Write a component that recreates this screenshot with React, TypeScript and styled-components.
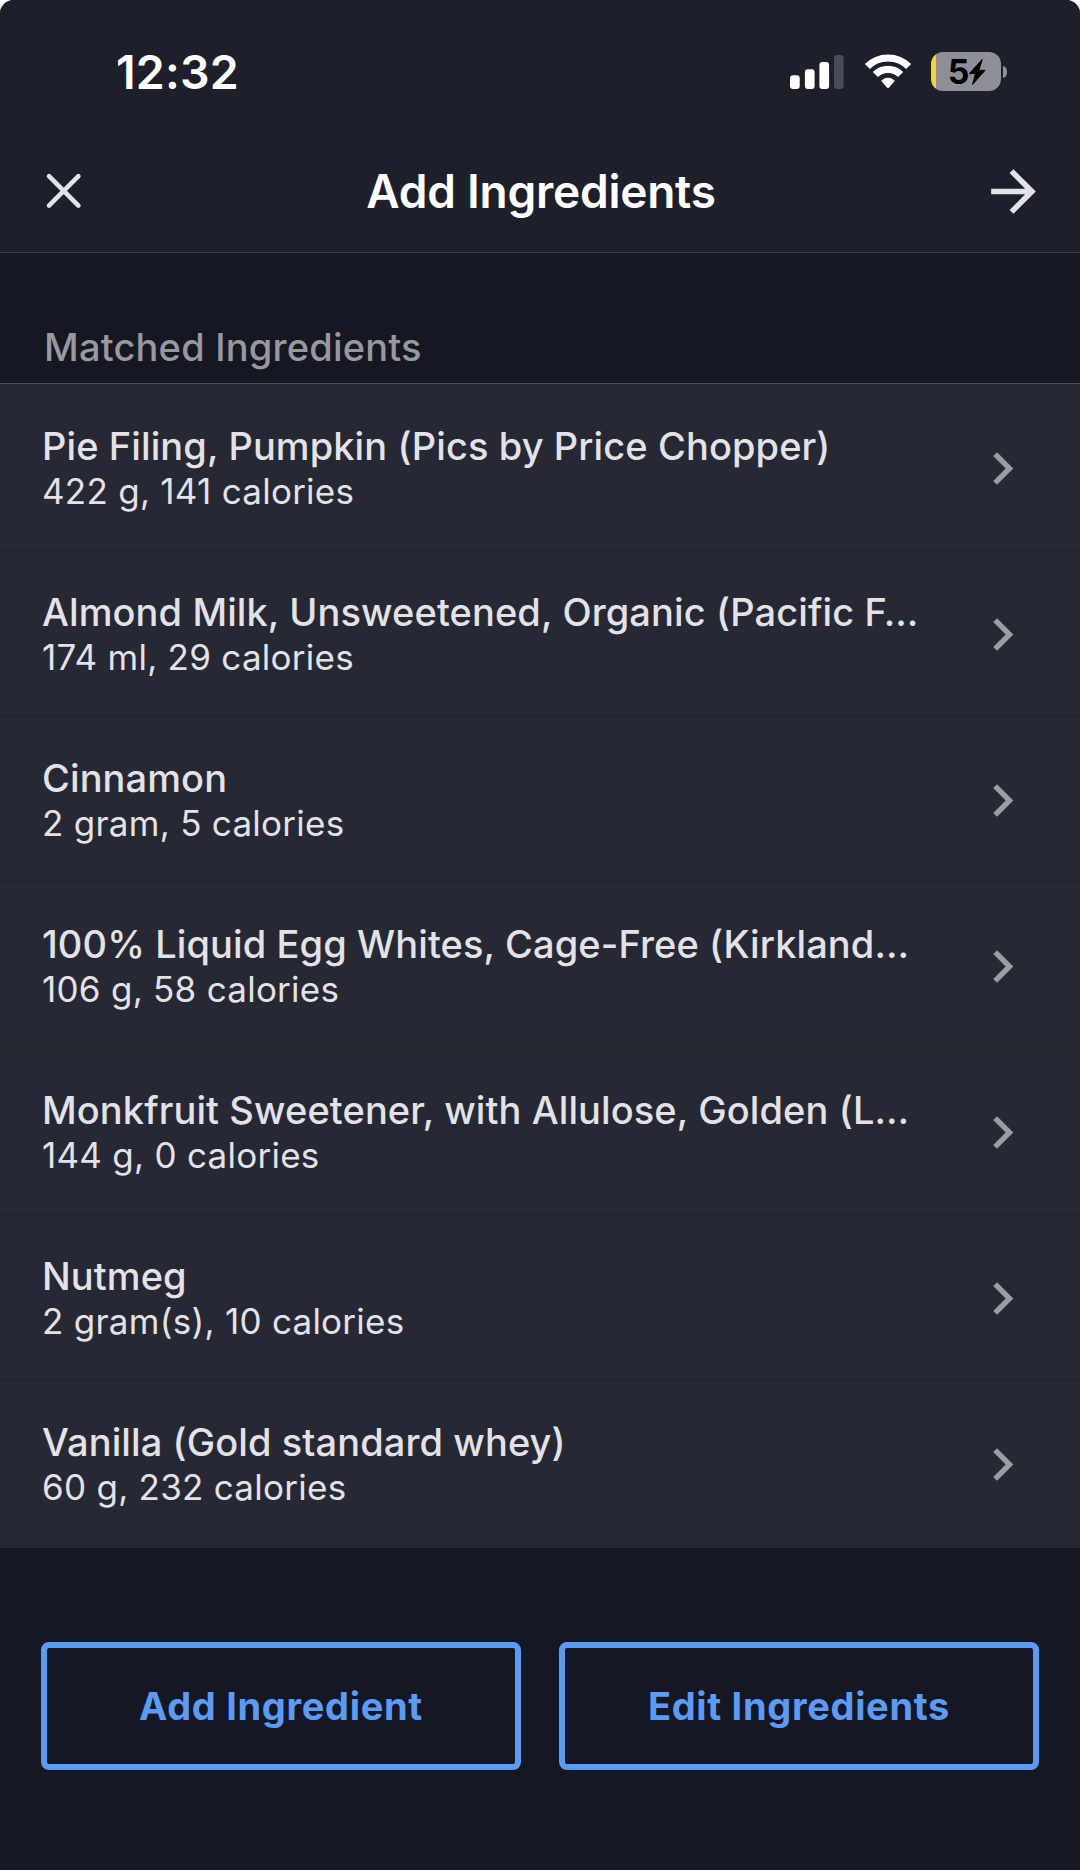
import React from "react";
import styled, { createGlobalStyle } from "styled-components";

const color = {
  bar: "#1d1f2a",
  page: "#151722",
  row: "#262833",
  text: "#e2e2e7",
  muted: "#98989e",
  accent: "#5c9bf5",
};

const GlobalStyle = createGlobalStyle`
  * { box-sizing: border-box; }
  body {
    margin: 0;
    background: #ffffff;
  }
`;

const Screen = styled.div`
  display: flex;
  flex-direction: column;
  width: 1080px;
  height: 1870px;
  overflow: hidden;
  border-radius: 14px 14px 0 0;
  background: ${color.page};
  color: ${color.text};
  font-family: Inter, "Liberation Sans", sans-serif;
`;

const Header = styled.header`
  flex: none;
  height: 253px;
  background: ${color.bar};
  border-bottom: 1px solid #3b3d48;
`;

const StatusBar = styled.div`
  display: flex;
  align-items: center;
  justify-content: space-between;
  height: 144px;
  padding: 0 73px 0 116px;
`;

const Time = styled.span`
  font-size: 46.5px;
  font-weight: 600;
  line-height: 56px;
  letter-spacing: 0.15px;
  color: #ffffff;
`;

const StatusIcons = styled.div`
  display: flex;
  align-items: center;
`;

const SignalIcon = styled.svg`
  width: 54px;
  height: 36px;
  margin-right: 20px;
`;

const WifiIcon = styled.svg`
  width: 48px;
  height: 36px;
  margin-right: 19px;
`;

const Battery = styled.div`
  display: flex;
  align-items: center;
  gap: 2px;
  padding-bottom: 1px;
`;

const BatteryBody = styled.div`
  display: flex;
  align-items: center;
  justify-content: center;
  width: 70px;
  height: 39px;
  padding-left: 2px;
  border-radius: 12px;
  background: linear-gradient(to right, #fbd133 5px, #8f9097 5px);
  color: #000000;
`;

const BatteryLevel = styled.span`
  font-size: 34px;
  font-weight: 700;
  line-height: 38px;
  letter-spacing: -1px;
`;

const BoltIcon = styled.svg`
  width: 18px;
  height: 28px;
`;

const BatteryCap = styled.div`
  width: 4px;
  height: 12px;
  border-radius: 0 4px 4px 0 / 0 6px 6px 0;
  background: #8f9097;
`;

const NavBar = styled.nav`
  display: grid;
  grid-template-columns: 100px 1fr 100px;
  align-items: center;
  height: 94px;
  padding: 0 33px;
`;

const NavButton = styled.button<{ $align: "start" | "end" }>`
  display: flex;
  justify-self: ${(p) => p.$align};
  padding: 0;
  border: 0;
  background: none;
  color: ${color.text};
`;

const Title = styled.h1`
  margin: 0;
  padding: 0 0 1px 2px;
  text-align: center;
  font-size: 46px;
  font-weight: 600;
  line-height: 56px;
  letter-spacing: -0.25px;
  color: #ffffff;
`;

const SectionHeading = styled.h2`
  display: flex;
  align-items: flex-end;
  flex: none;
  height: 131px;
  margin: 0;
  padding: 0 44px 13px;
  border-bottom: 1px solid #4a4c56;
  font-size: 38px;
  font-weight: 500;
  line-height: 46px;
  letter-spacing: 0.2px;
  color: ${color.muted};
`;

const List = styled.ul`
  flex: none;
  margin: 0;
  padding: 1px 0 0;
  background: ${color.row};
  list-style: none;
`;

const Row = styled.li`
  display: flex;
  align-items: center;
  justify-content: space-between;
  height: 166px;
  padding: 3px 45px 0 42px;
  border-bottom: 2px solid #22242e;

  &:last-child {
    height: 167px;
    padding-bottom: 3px;
    border-bottom: 0;
  }
`;

const RowText = styled.div`
  display: flex;
  flex-direction: column;
  white-space: nowrap;
`;

const Name = styled.span`
  font-size: 38px;
  font-weight: 500;
  line-height: 46px;
  letter-spacing: 0.1px;
`;

const Detail = styled.span`
  font-size: 35px;
  font-weight: 400;
  line-height: 45px;
  letter-spacing: 0.26px;
`;

const ChevronIcon = styled.svg`
  width: 65px;
  height: 65px;
  color: #9c9da3;
`;

const Actions = styled.div`
  display: grid;
  grid-template-columns: 1fr 1fr;
  gap: 38px;
  padding: 94px 41px 0;
`;

const ActionButton = styled.button`
  height: 128px;
  padding: 0;
  border: 6px solid ${color.accent};
  border-radius: 8px;
  background: none;
  color: ${color.accent};
  font-family: inherit;
  font-size: 38px;
  font-weight: 700;
  line-height: 46px;
  letter-spacing: 0.68px;
`;

const ingredients = [
  { name: "Pie Filing, Pumpkin (Pics by Price Chopper)", detail: "422 g, 141 calories" },
  { name: "Almond Milk, Unsweetened, Organic (Pacific F…", detail: "174 ml, 29 calories" },
  { name: "Cinnamon", detail: "2 gram, 5 calories" },
  { name: "100% Liquid Egg Whites, Cage-Free (Kirkland…", detail: "106 g, 58 calories" },
  { name: "Monkfruit Sweetener, with Allulose, Golden (L…", detail: "144 g, 0 calories" },
  { name: "Nutmeg", detail: "2 gram(s), 10 calories" },
  { name: "Vanilla (Gold standard whey)", detail: "60 g, 232 calories" },
];

function Signal() {
  return (
    <SignalIcon viewBox="0 0 54 36">
      <g fill="#ffffff">
        <rect x="0" y="21.3" width="9.7" height="13.7" rx="3" />
        <rect x="14.9" y="15.2" width="9.7" height="19.8" rx="3" />
        <rect x="29.4" y="8" width="9.7" height="27" rx="3" />
      </g>
      <rect x="44" y="1" width="9.7" height="34" rx="3" fill="#4a4b57" />
    </SignalIcon>
  );
}

function Wifi() {
  return (
    <WifiIcon viewBox="0 0 48 36">
      <g fill="none" stroke="#ffffff" strokeWidth="7.2">
        <path d="M3.4 12.5A29.2 29.2 0 0 1 44.6 12.5" />
        <path d="M11.4 20.5A17.9 17.9 0 0 1 36.6 20.5" />
      </g>
      <path
        d="M17.6 26.8Q24 21.3 30.4 26.8L24.7 33.6Q24 34.4 23.3 33.6Z"
        fill="#ffffff"
        stroke="#ffffff"
        strokeWidth="0.8"
        strokeLinejoin="round"
      />
    </WifiIcon>
  );
}

export default function App() {
  return (
    <>
      <GlobalStyle />
      <Screen>
        <Header>
          <StatusBar>
            <Time>12:32</Time>
            <StatusIcons>
              <Signal />
              <Wifi />
              <Battery>
                <BatteryBody>
                  <BatteryLevel>5</BatteryLevel>
                  <BoltIcon viewBox="0 0 18 28">
                    <path
                      d="M14.2 1.4L1.4 15.6H7.4L4.6 26.4L17 12.4H10.8Z"
                      fill="currentColor"
                      stroke="currentColor"
                      strokeWidth="1"
                      strokeLinejoin="round"
                    />
                  </BoltIcon>
                </BatteryBody>
                <BatteryCap />
              </Battery>
            </StatusIcons>
          </StatusBar>
          <NavBar>
            <NavButton $align="start" aria-label="Close">
              <svg width="60" height="60" viewBox="0 0 60 60">
                <path
                  d="M16 15.2L45.4 44.6M45.4 15.2L16 44.6"
                  stroke="currentColor"
                  strokeWidth="4.6"
                  strokeLinecap="round"
                />
              </svg>
            </NavButton>
            <Title>Add Ingredients</Title>
            <NavButton $align="end" aria-label="Next">
              <svg width="67" height="67" viewBox="0 0 24 24" fill="currentColor">
                <path d="M12 4l-1.41 1.41L16.17 11H4v2h12.17l-5.58 5.59L12 20l8-8z" />
              </svg>
            </NavButton>
          </NavBar>
        </Header>

        <SectionHeading>Matched Ingredients</SectionHeading>
        <List>
          {ingredients.map((item) => (
            <Row key={item.name}>
              <RowText>
                <Name>{item.name}</Name>
                <Detail>{item.detail}</Detail>
              </RowText>
              <ChevronIcon viewBox="0 0 24 24" fill="currentColor">
                <path d="M10 6L8.59 7.41 13.17 12l-4.58 4.59L10 18l6-6z" />
              </ChevronIcon>
            </Row>
          ))}
        </List>

        <Actions>
          <ActionButton>Add Ingredient</ActionButton>
          <ActionButton>Edit Ingredients</ActionButton>
        </Actions>
      </Screen>
    </>
  );
}
